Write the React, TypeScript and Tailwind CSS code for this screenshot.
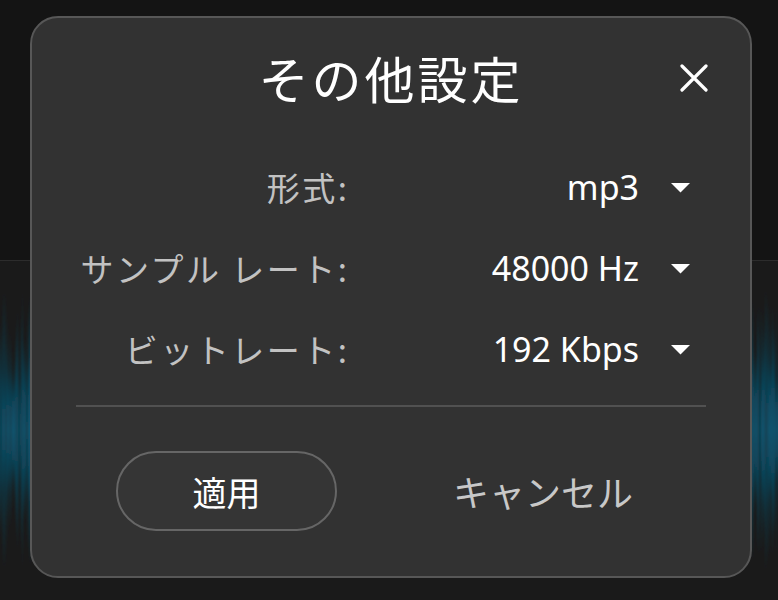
import React from "react";

const jp = { fontFamily: '"Noto Sans CJK JP", "Noto Sans", sans-serif' };
const lat = { fontFamily: '"Noto Sans", "Noto Sans CJK JP", sans-serif' };

function Wave({ seed, side }: { seed: number; side: "l" | "r" }) {
  const bars: { x: number; h: number; o: number }[] = [];
  let s = seed;
  const rnd = () => {
    s = (s * 9301 + 49297) % 233280;
    return s / 233280;
  };
  for (let i = 0; i < 40; i++) {
    const h = 90 + rnd() * 200;
    bars.push({ x: i, h, o: 0.5 + rnd() * 0.5 });
  }
  return (
    <svg width="40" height="320" viewBox="0 0 40 320" className="block">
      <defs>
        <filter id={"b" + side} x="-50%" y="-20%" width="200%" height="140%">
          <feGaussianBlur stdDeviation="1 3" />
        </filter>
        <linearGradient id={"g" + side} x1="0" y1="0" x2="0" y2="1">
          <stop offset="0" stopColor="#0a5673" stopOpacity="0" />
          <stop offset="0.3" stopColor="#0a5673" stopOpacity="0.9" />
          <stop offset="0.5" stopColor="#0b5c7a" stopOpacity="1" />
          <stop offset="0.7" stopColor="#0a5673" stopOpacity="0.9" />
          <stop offset="1" stopColor="#0a5673" stopOpacity="0" />
        </linearGradient>
      </defs>
      <g filter={`url(#b${side})`}>
        {bars.map((b, i) => (
          <rect
            key={i}
            x={b.x}
            y={160 - b.h / 2}
            width={1}
            height={b.h}
            fill={`url(#g${side})`}
            opacity={b.o}
          />
        ))}
      </g>
    </svg>
  );
}

function Caret() {
  return (
    <svg width="19" height="10" viewBox="0 0 19 10" className="block">
      <polygon points="0,0 19,0 9.5,9.5" fill="#ffffff" />
    </svg>
  );
}

function Row({ label, value }: { label: string; value: string }) {
  return (
    <div className="flex h-[81px] items-center">
      <div className="w-[315px] text-right text-[33px] text-[#c2c2c2]" style={jp}>
        <span className="mr-[-2.5px] tracking-[2.5px]">{label}</span>
      </div>
      <div className="w-[292px] text-right text-[34px] text-white" style={lat}>
        {value}
      </div>
      <div className="ml-[32px]">
        <Caret />
      </div>
    </div>
  );
}

export default function App() {
  return (
    <div className="relative h-[600px] w-[778px] overflow-hidden bg-[#1a1a1a]">
      <div className="h-[261px] border-b border-[#2c2c2c] bg-[#141414]" />
      <div className="absolute left-[-8px] top-[270px]">
        <Wave seed={7} side="l" />
      </div>
      <div className="absolute left-[748px] top-[270px]">
        <Wave seed={31} side="r" />
      </div>

      <div className="absolute left-[30px] top-[16px] flex h-[562px] w-[722px] flex-col rounded-[28px] border-2 border-[#575757] bg-[#323232]">
        <div className="relative flex h-[129px] items-start justify-center pt-[26px]">
          <div className="text-[50px] leading-[66px] tracking-[3px] text-white" style={jp}>
            その他設定
          </div>
          <svg
            className="absolute left-[648px] top-[46px]"
            width="28"
            height="28"
            viewBox="0 0 28 28"
          >
            <path d="M2 2 L26 26 M26 2 L2 26" stroke="#ffffff" strokeWidth="3.2" strokeLinecap="round" />
          </svg>
        </div>
        <div className="flex flex-col">
          <Row label="形式:" value="mp3" />
          <Row label="サンプル レート:" value="48000 Hz" />
          <Row label="ビットレート:" value="192 Kbps" />
        </div>
        <div className="mx-[44px] mt-[15px] h-[2px] bg-[#515151]" />
        <div className="mt-[44px] flex items-center">
          <button
            className="ml-[84px] flex h-[80px] w-[221px] items-center justify-center rounded-full border-2 border-[#666666] bg-[#353535] text-[34px] text-white"
            style={jp}
          >
            適用
          </button>
          <div className="ml-[116px] text-[36px] text-[#c8c8c8]" style={jp}>
            キャンセル
          </div>
        </div>
      </div>
    </div>
  );
}
